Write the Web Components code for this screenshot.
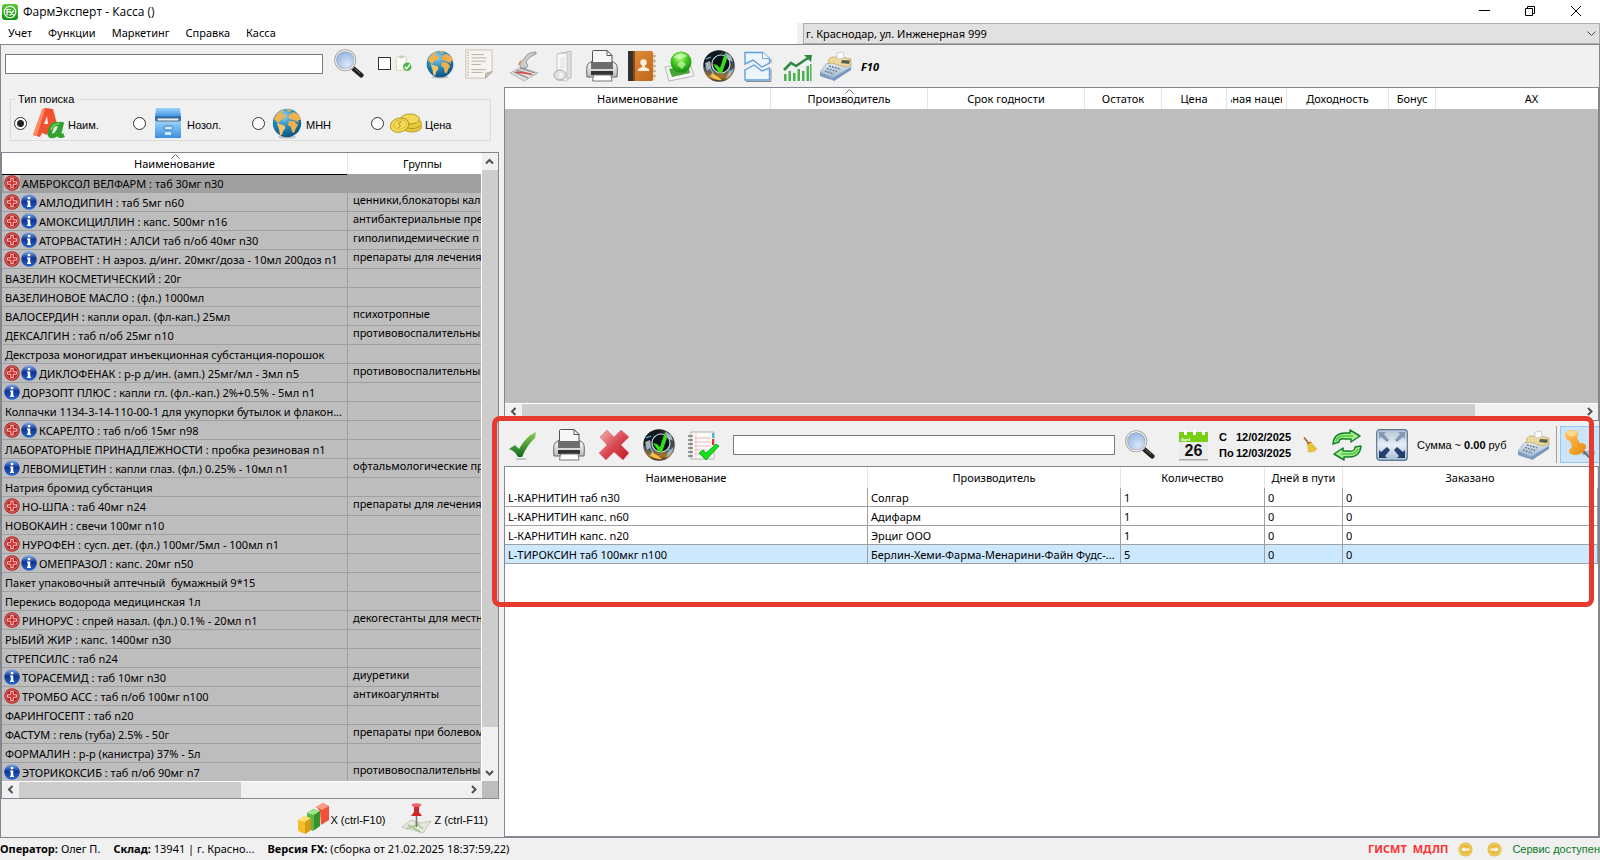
<!DOCTYPE html>
<html lang="ru">
<head>
<meta charset="utf-8">
<title>ФармЭксперт - Касса ()</title>
<style>
html,body{height:100%;margin:0}
body{background:#fff;color:#000;font:11px/16px "Noto Sans","Open Sans",sans-serif}
</style>
</head>
<body>
<fx-app></fx-app>
<script>
const CASH = `<defs><linearGradient id="a" x1="0" y1="0" x2="0" y2="1"><stop offset="0" stop-color="#e6edf4"/><stop offset="1" stop-color="#9cb6d2"/></linearGradient></defs>
<path d="M0 22 13 27 13 30Q7 29 0 26Z" fill="#7e9dc0"/><path d="M13 27 31 15 31 20 14 31 12 30Z" fill="#7298c2"/><path d="M0 22 6 14 12 12 31 14 31 17 13 28Z" fill="url(#a)" stroke="#8da5bd" stroke-width=".6"/>
<path d="M12 7 22 7 31 9 31 15 25 17 12 13 8 14 9 9Z" fill="#ecd9a0" stroke="#b59a4c" stroke-width=".6"/><path d="M22 10 30 10.500 29 14 21 13Z" fill="#56604a"/>
<path d="M17 3 23 2 24 8 17 9Z" fill="#fff" stroke="#b5bcc4" stroke-width=".7"/>
<path d="M5 21 14 24M7 18.500 17 21.500M9 16 20 19" stroke="#6d7c8c" stroke-width="1.500" stroke-dasharray="1.800 1.200"/>`;
const GLOBE = `<defs><radialGradient id="g" cx=".4" cy=".25" r=".8"><stop offset="0" stop-color="#8fd0ea"/><stop offset=".5" stop-color="#2388b8"/><stop offset="1" stop-color="#0a4c7c"/></radialGradient></defs>
<ellipse cx="16" cy="30" rx="9" ry="1.600" fill="#0003"/><circle cx="16" cy="16" r="14.200" fill="url(#g)"/>
<path d="M3 12Q6 5 12 3L13 5 10 6 12 8 15 7 14 11 11 12 9 14 8 16 6 15Z" fill="#f0b350"/><path d="M6 16 9 17 14 19 14 22 12 24 11 28 9 28 8 22Z" fill="#f7c467"/>
<path d="M15 2 21 3 18 5ZM19 7 23 5 28 8 30 13 27 13 28 16 25 14 22 13 19 12 17 10ZM18 14 23 14 27 18 25 21 23 26 21 25 20 20 17 18Z" fill="#eeb04c"/>`;
const ORB = `<defs><linearGradient id="o" x1="0" y1="0" x2="0" y2="1"><stop offset="0" stop-color="#1b2228"/><stop offset=".6" stop-color="#4c545a"/><stop offset=".85" stop-color="#a87426"/><stop offset="1" stop-color="#333"/></linearGradient></defs>
<circle cx="16" cy="16" r="15.800" fill="url(#o)"/><path d="M4 6Q10 0 19 1L13 6 6 14 1 17Q0 10 4 6Z" fill="#101820"/>
<path d="M2 13 7 11 8 18 4 21ZM22 2 28 6 30 12 26 10ZM25 23 31 18 28 25 23 29Z" fill="#aab3b9"/><path d="M3 9 8 7M7 18 10 23 7 27M22 4 26 9M25 21 30 21" stroke="#69bfe9" stroke-width="1.200" fill="none"/>
<path d="M8 27Q13 31 19 30L15 27 9 23Z" fill="#ffbf45"/><circle cx="18" cy="14" r="9" fill="#061517" stroke="#c5d5dc" stroke-width="1.200"/>
<path d="M10 14 14 15 17 18 22 3 24 9 19 23 16 23Z" fill="#35e01a"/>`;
const MAG = `<defs><radialGradient id="m" cx=".6" cy=".7" r=".7"><stop offset="0" stop-color="#dbe8fb"/><stop offset="1" stop-color="#8fb1dc"/></radialGradient></defs>
<path d="M21 21 29 28" stroke="#222" stroke-width="5" stroke-linecap="round"/><path d="M18 18 21 20" stroke="#aaa" stroke-width="3"/><path d="M22 21 28 26" stroke="#777" stroke-width="1"/>
<circle cx="12" cy="12" r="10.500" fill="url(#m)" stroke="#a0a0a0" stroke-width="2.600"/><circle cx="12" cy="12" r="10.300" fill="none" stroke="#f2f2f2" stroke-width="1.200"/>`;
const PRINTER = `<defs><linearGradient id="p" x1="0" y1="0" x2="0" y2="1"><stop offset="0" stop-color="#fff"/><stop offset="1" stop-color="#bbb"/></linearGradient></defs>
<path d="M2 14 6 11H26L30 14Q32 16 31 27H1Q0 16 2 14Z" fill="url(#p)" stroke="#666" stroke-width="1"/>
<path d="M6.500 14V1.500Q6.500 .5 7.500 .5H21L26 5.500V14Z" fill="#f7f7f7" stroke="#555"/><path d="M21 .5V5.500H26Z" fill="#fff" stroke="#555"/>
<path d="M5 12H27V19H5Z" fill="#6d6d6d"/><path d="M5 21H27V25H5Z" fill="#333"/><path d="M7.500 25H25L26 31H6.500Z" fill="#fff" stroke="#777"/>`;
const ICONS = {
logo:`<defs><linearGradient id="l" x1="0" y1="0" x2="0" y2="1"><stop offset="0" stop-color="#5ecb3a"/><stop offset="1" stop-color="#119112"/></linearGradient></defs><rect width="32" height="32" rx="6" fill="url(#l)"/><circle cx="16" cy="16" r="11.500" fill="none" stroke="#fff" stroke-width="2.200"/><path d="M10 23V11H18M10 16H16M15 14 24 23M24 13 15 23" stroke="#fff" stroke-width="2.400" fill="none"/>`,
search:MAG, globe:GLOBE, printer:PRINTER, orb:ORB, cash:CASH,
clip:`<path d="M2 4 21 3 22 28 3 29Z" fill="#fbfbf3" stroke="#d3d0b8" stroke-width="1.500"/><path d="M8 1H16V6H8Z" fill="#c9c9c9"/><circle cx="23" cy="22" r="8" fill="#4cb648"/><path d="M18 22 22 26 28 18" stroke="#fff" stroke-width="2.800" fill="none"/>`,
note:`<path d="M3 1H31V25L24 31H3Z" fill="#f6f4ef" stroke="#c6c0b5"/><path d="M31 24 24 31 24 26Z" fill="#cfc8b8" stroke="#9a9384" stroke-width=".7"/><path d="M5.500 3V30" stroke="#b9b4aa" stroke-width="1.500" stroke-dasharray="1.500 1.500"/><path d="M9 6H22M9 9.500H25M9 13H24M9 16.500H19M9 22H24M9 25H21" stroke="#b4afa5" stroke-width="1"/>`,
letters:`<path d="M0 28 9 3Q10 1 13 1L20 2 24 17 18 20 14 28 9 26 7 30Z" fill="#f2512e"/><path d="M11 17 15 17 14 9Z" fill="#efefef"/><path d="M0 28 9 3 12 2 4 29Z" fill="#ff8a68"/><path d="M29 15 26 27Q26 30 31 28M27 18Q20 15 18 22 15 29 19 29 24 29 27 20" stroke="#2fa32e" stroke-width="4.500" fill="none"/><path d="M26 17Q20 16 18 23" stroke="#7fdd5c" stroke-width="1.400" fill="none"/>`,
cabinet:`<defs><linearGradient id="c" x1="0" y1="0" x2="0" y2="1"><stop offset="0" stop-color="#9bd4fb"/><stop offset="1" stop-color="#3a8fe0"/></linearGradient></defs><path d="M4 1H28L29 10H3Z" fill="url(#c)"/><path d="M3 9H29V31H3Z" fill="#2d78c4"/><path d="M3 14H29L29 31H3Z" fill="url(#c)"/><path d="M5 11 27 11V14H5Z" fill="#e9eef2" stroke="#3c4c5c" stroke-width=".8"/><rect x="12" y="19" width="9" height="4" rx="2" fill="#cfe6fa" stroke="#3b7fc0"/><rect x="13" y="25" width="6" height="3" fill="#cfe6fa"/>`,
coins:`<g fill="#e9c93a" stroke="#a98716" stroke-width=".8"><ellipse cx="22" cy="20" rx="9.500" ry="5"/><ellipse cx="22" cy="16.500" rx="9.500" ry="5"/><ellipse cx="20" cy="12" rx="9.500" ry="5" fill="#f2d956"/><ellipse cx="9.500" cy="18" rx="9.500" ry="7" transform="rotate(-14 10 18)" fill="#f3da57"/></g><ellipse cx="10" cy="17.500" rx="6.500" ry="4.500" fill="none" stroke="#d3b236" stroke-width=".8" transform="rotate(-14 10 17)"/><path d="M11.500 15Q8 15 9 17.500 12 19 8.500 20.500" stroke="#b08c18" fill="none"/>`,
scanner:`<path d="M2 23 13 17 30 23 16 31Z" fill="#dedede" stroke="#a5a5a5" stroke-width=".7"/><path d="M6 22 20 28M9 20 25 25M12 18 27 23" stroke="#8a8a8a" stroke-width="1.300"/><path d="M8 22 23 24" stroke="#e64343" stroke-width="1.600"/><path d="M28 2Q19 2 16 9L11 13 13 18 18 18 20 16 18 12Q21 6 28 4Z" fill="#c9cdd0" stroke="#888" stroke-width=".8"/><path d="M13 11 11 15" stroke="#e09a50" stroke-width="2"/>`,
door:`<path d="M10 4 24 1V28L19 30Z" fill="#dedede" stroke="#bcbcbc"/><path d="M10 4 20 3V31L10 30Z" fill="#f7f7f7" stroke="#c6c6c6"/><path d="M13 8 18 7V18L13 19Z" fill="#eaeaea"/><ellipse cx="13" cy="25" rx="6" ry="5" fill="#e0e0e0" fill-opacity=".85" stroke="#a9a9a9"/><ellipse cx="14" cy="25" rx="1.800" ry="2.300" fill="#f5f5f5"/>`,
book:`<defs><linearGradient id="b" x1="0" y1="0" x2="1" y2="1"><stop offset="0" stop-color="#e2913c"/><stop offset="1" stop-color="#c0661a"/></linearGradient></defs><path d="M27 3H30V30H27Z" fill="#e6dccb"/><path d="M28 6H31M28 11H31M28 16H31M28 21H31M28 26H31" stroke="#9b8d78"/><rect x="3" y="1" width="25" height="30" rx="1.500" fill="url(#b)"/><path d="M3 1H8V31H3Z" fill="#353230"/><path d="M8 1H10V31H8Z" fill="#8d4b18"/><circle cx="18.500" cy="12.500" r="3.200" fill="#fbeedd"/><path d="M17 14H20V17L24 19V21H13V19L17 17Z" fill="#fbeedd"/>`,
sphere:`<defs><radialGradient id="s" cx=".45" cy=".3" r=".7"><stop offset="0" stop-color="#c9ff9c"/><stop offset=".5" stop-color="#45c81f"/><stop offset="1" stop-color="#168a10"/></radialGradient></defs><path d="M1 17 26 13 30 26 5 31Z" fill="#f4f4f4" stroke="#aaa" stroke-width=".8"/><path d="M5 19 24 15 26 23 8 27Z" fill="#4aa336"/><circle cx="17" cy="12" r="10.500" fill="url(#s)"/><path d="M9 8Q15 0 24 6 17 9 9 8ZM13 15 17 11 22 14 18 19Z" fill="#e1ffd0" opacity=".6"/>`,
chart:`<path d="M3 2.500H20.500L27.500 8.500V13L20 17 11 10 3 14Z" fill="#edf4fc" stroke="#5f9fe2" stroke-width="1.400"/><path d="M20.500 2.500V8.500H27.500" fill="#fff" stroke="#6ea7e2"/><path d="M3 20 12 15 20 21 27.500 18V30H3Z" fill="#edf4fc" stroke="#5f9fe2" stroke-width="1.400"/><path d="M29 9V13M29 19V31.500H4" stroke="#8a8a8a" fill="none"/>`,
growth:`<g fill="#4caf50"><path d="M3 24H5.500V31H3ZM7.500 21H10V31H7.500ZM12 23H14.500V31H12ZM16.500 19H19V31H16.500ZM21 21H23.500V31H21ZM25.500 16H28V31H25.500ZM29 14H30.500V31H29Z"/></g><path d="M3 20 10 13 15 16 27 8" stroke="#2f8a42" stroke-width="2.600" fill="none"/><path d="M23 5 31 5 30 12Z" fill="#2f8a42"/>`,
check:`<defs><linearGradient id="k" x1="0" y1="0" x2="0" y2="1"><stop offset="0" stop-color="#8fd05c"/><stop offset="1" stop-color="#126a1b"/></linearGradient></defs><ellipse cx="13" cy="30" rx="6" ry="1" fill="#0003"/><path d="M1 20 7 16 11 20Q18 7 28 3L27 9Q19 16 14 28L10 28Q7 22 1 20Z" fill="url(#k)"/>`,
cross:`<defs><linearGradient id="x" x1="0" y1="0" x2="1" y2="1"><stop offset="0" stop-color="#f7b6b6"/><stop offset=".5" stop-color="#d94a55"/><stop offset="1" stop-color="#c31522"/></linearGradient></defs><path d="M9 1 16 8 23 1 31 8 23 16 31 24 25 31 16 23 8 31 1 24 9 16 2 8Z" fill="url(#x)" stroke="#d98088" stroke-width=".8"/>`,
notepad:`<path d="M3 3H26V30H3Z" fill="#fcfcfc" stroke="#b0b0b0"/><path d="M24 4H26V9H24Z" fill="#35bdf0"/><path d="M24 10H26V16H24Z" fill="#e7302a"/><path d="M6 9H23M6 13H23M6 17H23M6 21H19M6 25H15" stroke="#efb3b3"/><path d="M8 4V29" stroke="#f4c3c3"/><path d="M0 7H5M0 11H5M0 15H5M0 19H5M0 23H5M0 27H5" stroke="#777" stroke-width="1.400"/><path d="M11 24 15 21 18 24 28 15 31 17 18 31Z" fill="#13e11c" stroke="#0a9a14" stroke-width=".8"/>`,
calendar:`<path d="M1 3H30V31H1Z" fill="#ebebeb"/><path d="M1 3H30V13H1Z" fill="#79cf18"/><path d="M1 30H30V31.500H1Z" fill="#aaa"/><path d="M6 1H9V6H6ZM15 1H18V6H15ZM24 1H27V6H24Z" fill="#fff"/><text x="3" y="12" font-family="Liberation Sans" font-weight="700" font-size="4" fill="#fff">April</text><text x="15.500" y="27" text-anchor="middle" font-family="Liberation Sans" font-weight="700" font-size="16" fill="#111">26</text>`,
broom:`<path d="M4 1 13 12" stroke="#a7663a" stroke-width="3.500"/><path d="M10 13 17 9 20 12 13 18Z" fill="#c64b2c"/><path d="M11 15 18 11 30 24Q24 31 13 30Z" fill="#f0cf3c" stroke="#c49b1c"/><path d="M15 17 18 28M18 15 25 26" stroke="#b98f18"/>`,
refresh:`<g fill="#a5ec8c" stroke="#15812a" stroke-width="1.500" stroke-linejoin="round"><path d="M2 15Q3 4 14 4H19V1L29 7 20 13V10H14Q8 9 8 13Z"/><path d="M30 17Q29 28 18 28H13V31L3 25 12 19V22H18Q24 23 24 18Z"/></g><path d="M5 12Q7 7 13 7H22M27 20Q25 25 19 25H10" stroke="#4fc93e" fill="none" stroke-width="1.600"/>`,
expand:`<defs><linearGradient id="e" x1="0" y1="0" x2="0" y2="1"><stop offset="0" stop-color="#b3c4d6"/><stop offset=".5" stop-color="#e6edf4"/><stop offset="1" stop-color="#a9bdd2"/></linearGradient></defs><rect x=".7" y=".7" width="30.600" height="30.600" rx="3" fill="url(#e)" stroke="#5d7590" stroke-width="1.200"/><g fill="#8499b3"><path d="M3 3H10L8 5 13 11 11 13 5 8 3 10Z"/><path d="M29 3H22L24 5 19 11 21 13 27 8 29 10Z"/></g><g fill="#22406b"><path d="M3 29H11L9 27 14 21 11 18 5 23 3 21Z"/><path d="M29 29H21L23 27 18 21 21 18 27 23 29 21Z"/></g>`,
pin:`<path d="M18 24 31 24" stroke="#a5b6c4" stroke-width="4"/><path d="M17 20 26 29" stroke="#5f6b75" stroke-width="2"/><defs><linearGradient id="n" x1="0" y1="0" x2="1" y2="1"><stop offset="0" stop-color="#ffc45c"/><stop offset="1" stop-color="#e98a0b"/></linearGradient></defs><path d="M1 7Q1 2 7 1 14 1 14 5L13 9 16 14Q23 14 22 19 19 25 12 26 4 26 5 21L8 18 6 12Q2 11 1 7Z" fill="url(#n)"/><ellipse cx="8" cy="4.500" rx="5" ry="3" fill="#ffd98c"/>`,
cubes:`<path d="M1 17 7 13 14 15 14 27 8 31 1 28Z" fill="#f4be2a"/><path d="M1 17 7 13 14 15 8 19Z" fill="#ffe07a"/><path d="M8 19 14 15V27L8 31Z" fill="#d69a15"/><path d="M10 10 16 6 23 8V23L16 28 14 27V15L10 14Z" fill="#5cb946"/><path d="M10 10 16 6 23 8 17 12Z" fill="#a2e38a"/><path d="M17 12 23 8V23L17 27Z" fill="#37912c"/><path d="M19 4 26 0 32 3V17L24 22 23 8Z" fill="#ef5236"/><path d="M19 4 26 0 32 3 25 7Z" fill="#ff9d84"/>`,
mappin:`<path d="M1 24 10 17 20 20 30 18 22 30 12 27Z" fill="#e6e8df" stroke="#b9bdb2" stroke-width=".8"/><path d="M7 22 13 25 19 29M14 19 22 26M5 26 18 21" stroke="#a8c48f" stroke-width="1.600" fill="none"/><path d="M15.500 13V24" stroke="#777" stroke-width="1.500"/><path d="M11 1H20L18 4 18 9 21 13H10L13 9V4Z" fill="#cc2a30"/><ellipse cx="15.500" cy="2" rx="5" ry="1.800" fill="#e8666a"/>`,
plus:`<circle cx="16" cy="16" r="15.500" fill="#b52222"/><circle cx="16" cy="16" r="12.500" fill="none" stroke="#e8b4b4" stroke-width="1.200"/><path d="M13.500 7H18.500V13.500H25V18.500H18.500V25H13.500V18.500H7V13.500H13.500Z" fill="#d62828" stroke="#f4d8d8" stroke-width="1.800"/>`,
info:`<defs><linearGradient id="i" x1="0" y1="0" x2="0" y2="1"><stop offset="0" stop-color="#86acee"/><stop offset=".45" stop-color="#0c3494"/><stop offset="1" stop-color="#2a68d4"/></linearGradient></defs><circle cx="16" cy="16" r="15.500" fill="url(#i)"/><rect x="13.500" y="6" width="5" height="4.500" fill="#fff"/><path d="M12 13H18.500V23.500H20V26H12V23.500H13.500V15.500H12Z" fill="#fff"/>`,
back:`<circle cx="16" cy="16" r="15" fill="#e9b93a"/><circle cx="16" cy="16" r="11.500" fill="none" stroke="#f8e3a4" stroke-width="1.500"/><path d="M7 16 14 10V14H24V18H14V22Z" fill="#fff"/>`,
forward:`<circle cx="16" cy="16" r="15" fill="#e9b93a"/><circle cx="16" cy="16" r="11.500" fill="none" stroke="#f8e3a4" stroke-width="1.500"/><path d="M25 16 18 10V14H8V18H18V22Z" fill="#fff"/>`
};
const define = (name, html) => customElements.define(name, class extends HTMLElement {
  constructor(){ super(); this.attachShadow({mode:'open'}); }
  connectedCallback(){
    if (this.shadowRoot.childNodes.length) return;
    const t = document.createElement('template');
    t.innerHTML = typeof html === 'function' ? html(this) : html;
    this.shadowRoot.append(t.content.cloneNode(true));
  }
});

define('fx-icon', el => `<style>:host{display:block;flex:none;width:var(--size,32px);height:var(--size,32px)}svg{display:block;width:100%;height:100%}</style>
<svg viewBox="0 0 32 32" aria-hidden="true">${ICONS[el.getAttribute('name')]}</svg>`);

define('fx-tool', el => `<style>:host{display:block;flex:none}
button{display:flex;align-items:center;justify-content:center;gap:2px;box-sizing:border-box;width:100%;height:100%;margin:0;padding:0;border:0;background:none;font:inherit;color:inherit;white-space:nowrap}
:host([pressed]) button{background:#cce4f7;border:1px solid #90c8f6;border-right:0}</style>
<button type="button" aria-label="${el.getAttribute('label')}"><fx-icon name="${el.getAttribute('icon')}"></fx-icon><slot></slot></button>`);

define('fx-scrollbar', el => {
  const v = el.hasAttribute('vertical'), [a, b] = (el.getAttribute('parts')).split(' ');
  return `<style>:host{display:flex;flex-direction:${v ? 'column' : 'row'};flex:none;${v ? 'width' : 'height'}:16px;background:#f0f0f0}
button{flex:none;display:grid;place-items:center;width:${v ? 15 : 17}px;height:${v ? 17 : 15}px;margin:0;padding:0;border:0;background:none}
svg{display:block;width:9px;height:9px;fill:none;stroke:#505050;stroke-width:2}
.thumb{flex:${a} 1 0;background:#cdcdcd}.rest{flex:${b} 1 0}</style>
<button type="button" aria-label="Назад"><svg viewBox="0 0 9 9"><path d="${v ? 'M1 6.500 4.500 3 8 6.500' : 'M6.500 1 3 4.500 6.500 8'}"/></svg></button>
<div class="thumb"></div><div class="rest"></div>
<button type="button" aria-label="Вперёд"><svg viewBox="0 0 9 9"><path d="${v ? 'M1 3 4.500 6.500 8 3' : 'M3 1 6.500 4.500 3 8'}"/></svg></button>`;
});

define('fx-titlebar', `<style>:host{display:flex;align-items:center;flex:none;height:23px;padding-left:2px;font-size:12px}
fx-icon{--size:16px}h1{flex:1;margin:0 0 0 5px;font:400 12px/23px "Open Sans","Noto Sans",sans-serif}
button{width:46px;height:21px;margin:0;padding:0;border:0;background:none;display:grid;place-items:center}svg{width:12px;height:12px;fill:none;stroke:#000}</style>
<fx-icon name="logo"></fx-icon><h1>ФармЭксперт - Касса ()</h1>
<button type="button" aria-label="Свернуть"><svg viewBox="0 0 12 12"><path d="M0 4.500H11"/></svg></button>
<button type="button" aria-label="Восстановить"><svg viewBox="0 0 12 12"><path d="M.5 2.500H7.500V9.500H.5ZM2.500 2V.5H9.500V7.500H8"/></svg></button>
<button type="button" aria-label="Закрыть"><svg viewBox="0 0 12 12"><path d="M0 0 10 10M10 0 0 10"/></svg></button>`);

define('fx-menubar', `<style>:host{display:flex;flex:none;height:21px}
nav{flex:1;display:flex;gap:16px;padding-left:8px}
nav a{color:inherit;text-decoration:none;line-height:20px}
.place{box-sizing:border-box;width:calc(50% + 3px);padding-left:6px;background:#f0f0f0;position:relative;display:flex}
select{appearance:none;flex:1;height:21px;margin:0;padding:0 20px 0 2px;border:1px solid #adadad;border-radius:0;background:#e1e1e1;color:#000;font:inherit}
svg{position:absolute;right:4px;top:7px;width:9px;height:7px;fill:none;stroke:#444}</style>
<nav><a href="#">Учет</a><a href="#">Функции</a><a href="#">Маркетинг</a><a href="#">Справка</a><a href="#">Касса</a></nav>
<div class="place"><select aria-label="Адрес аптеки"><option>г. Краснодар, ул. Инженерная 999</option></select><svg viewBox="0 0 9 7"><path d="M.5 1.500 4.500 5.500 8.500 1.500"/></svg></div>`);

define('fx-search', `<style>:host{display:block;flex:none;height:107px;font-family:"Liberation Sans",sans-serif}
.row{display:flex;align-items:center;height:37px;padding-left:4px}
input[type=text]{box-sizing:border-box;width:318px;height:20px;margin:0 10px 0 0;border:1px solid #7a7a7a;background:#fff;font:inherit}
.check{display:flex;align-items:center;gap:4px;margin:0 12px 0 13px}
.check input{appearance:none;width:13px;height:13px;margin:0;border:1px solid #333;background:#fff}
.check fx-icon{--size:17px}.row>fx-tool{width:32px;--size:30px}.row>.n{margin-left:6px;--size:30px}
fieldset{box-sizing:border-box;width:480px;height:50px;margin:9px 0 0 9px;padding:0 0 0 3px;border:1px solid #dcdcdc;display:block}
legend{margin-left:1px;padding:0 3px;line-height:16px}
.types{display:grid;grid-template-columns:repeat(4,119px)}
.types label{display:flex;align-items:center}
.types span{padding-top:3px}
.types input{appearance:none;box-sizing:border-box;width:13px;height:13px;margin:0 6px 0 0;border:1px solid #333;border-radius:50%;background:#fff}
.types input:checked{background:radial-gradient(circle,#222 0 3px,#fff 4px)}
.types fx-icon{margin-right:3px}</style>
<div class="row"><input type="text" aria-label="Поиск"><fx-tool icon="search" label="Найти"></fx-tool>
<label class="check"><input type="checkbox" aria-label="Только в наличии"><fx-icon name="clip"></fx-icon></label>
<fx-tool icon="globe" label="МНН"></fx-tool><fx-tool class="n" icon="note" label="Заметки"></fx-tool></div>
<fieldset><legend>Тип поиска</legend><div class="types">
<label><input type="radio" name="t" checked><fx-icon name="letters"></fx-icon><span>Наим.</span></label>
<label><input type="radio" name="t"><fx-icon name="cabinet"></fx-icon><span>Нозол.</span></label>
<label><input type="radio" name="t"><fx-icon name="globe"></fx-icon><span>МНН</span></label>
<label><input type="radio" name="t"><fx-icon name="coins"></fx-icon><span>Цена</span></label></div></fieldset>`);

const TABLE = `table{border-collapse:separate;border-spacing:0;table-layout:fixed;width:100%}
th{box-sizing:border-box;position:relative;height:21px;padding:0 4px;background:#fff;border-right:1px solid #e5e5e5;font-weight:400;line-height:20px;text-align:center;white-space:nowrap;overflow:hidden}
th div{display:flex;justify-content:center;overflow:hidden}
td{box-sizing:border-box;height:19px;padding:0 0 0 3px;border-right:1px solid #a0a0a0;border-bottom:1px solid #a0a0a0;line-height:18px;white-space:nowrap;overflow:hidden;text-overflow:ellipsis}
th svg{position:absolute;left:calc(50% - 4px);top:1px;width:9px;height:5px;fill:none;stroke:#666}`;
const CARET = `<svg viewBox="0 0 9 5"><path d="M.5 4.500 4.500 .5 8.500 4.500"/></svg>`;

const DRUGS = [
['+','АМБРОКСОЛ ВЕЛФАРМ : таб 30мг n30',''],['+i','АМЛОДИПИН : таб 5мг n60','ценники,блокаторы кал'],
['+i','АМОКСИЦИЛЛИН : капс. 500мг n16','антибактериальные пре'],['+i','АТОРВАСТАТИН : АЛСИ таб п/об 40мг n30','гиполипидемические п'],
['+i','АТРОВЕНТ : Н аэроз. д/инг. 20мкг/доза - 10мл 200доз n1','препараты для лечения'],['','ВАЗЕЛИН КОСМЕТИЧЕСКИЙ : 20г',''],
['','ВАЗЕЛИНОВОЕ МАСЛО : (фл.) 1000мл',''],['','ВАЛОСЕРДИН : капли орал. (фл-кап.) 25мл','психотропные'],
['','ДЕКСАЛГИН : таб п/об 25мг n10','противовоспалительны'],['','Декстроза моногидрат инъекционная субстанция-порошок',''],
['+i','ДИКЛОФЕНАК : р-р д/ин. (амп.) 25мг/мл - 3мл n5','противовоспалительны'],['i','ДОРЗОПТ ПЛЮС : капли гл. (фл.-кап.) 2%+0.5% - 5мл n1',''],
['','Колпачки 1134-3-14-110-00-1 для укупорки бутылок и флакон...',''],['+i','КСАРЕЛТО : таб п/об 15мг n98',''],
['','ЛАБОРАТОРНЫЕ ПРИНАДЛЕЖНОСТИ : пробка резиновая n1',''],['i','ЛЕВОМИЦЕТИН : капли глаз. (фл.) 0.25% - 10мл n1','офтальмологические пр'],
['','Натрия бромид субстанция',''],['+','НО-ШПА : таб 40мг n24','препараты для лечения'],['','НОВОКАИН : свечи 100мг n10',''],
['+','НУРОФЕН : сусп. дет. (фл.) 100мг/5мл - 100мл n1',''],['+i','ОМЕПРАЗОЛ : капс. 20мг n50',''],
['','Пакет упаковочный аптечный&nbsp; бумажный 9*15',''],['','Перекись водорода медицинская 1л',''],
['+','РИНОРУС : спрей назал. (фл.) 0.1% - 20мл n1','декогестанты для местн'],['','РЫБИЙ ЖИР : капс. 1400мг n30',''],['','СТРЕПСИЛС : таб n24',''],
['i','ТОРАСЕМИД : таб 10мг n30','диуретики'],['+','ТРОМБО АСС : таб п/об 100мг n100','антикоагулянты'],['','ФАРИНГОСЕПТ : таб n20',''],
['','ФАСТУМ : гель (туба) 2.5% - 50г','препараты при болевом'],['','ФОРМАЛИН : р-р (канистра) 37% - 5л',''],['i','ЭТОРИКОКСИБ : таб п/об 90мг n7','противовоспалительны']];

define('fx-drug-list', () => `<style>:host{display:grid;grid-template:minmax(0,1fr) 17px/minmax(0,1fr) 16px;flex:1 1 0;min-height:0;width:496px;border:1px solid #828790;background:#bdbdbd}
${TABLE}
.body{overflow:hidden;border-right:1px solid #fff}
table{width:calc(100% + 16px)}
col.n{width:346px}
td.n{padding:0 0 0 2px}
td.n div{display:flex;align-items:center;height:18px}
fx-icon{--size:16px;margin-right:1px}
td span{padding:1px 0 0 1px}
td.g{padding-left:5px;line-height:14px;vertical-align:top;text-overflow:clip;border-right:0}
th:last-child{border-right:0}
.sel td{background:#a0a0a0;border-color:#a0a0a0}
.sel td.n{box-shadow:inset 0 1px #000}.sel fx-icon{background:#bdbdbd}
.h{border-top:1px solid #fff}</style>
<div class="body"><table><colgroup><col class="n"><col></colgroup><thead><tr><th>${CARET}Наименование</th><th>Группы</th></tr></thead>
<tbody>${DRUGS.map(([k,n,g],i) => `<tr${i ? '' : ' class="sel"'}><td class="n"><div>${k.includes('+') ? '<fx-icon name="plus"></fx-icon>' : ''}${k.includes('i') ? '<fx-icon name="info"></fx-icon>' : ''}<span>${n}</span></div></td><td class="g">${g}</td></tr>`).join('')}</tbody></table></div>
<fx-scrollbar vertical parts="558 37"></fx-scrollbar><fx-scrollbar class="h" parts="222 224"></fx-scrollbar>`);

define('fx-left', `<style>:host{display:flex;flex-direction:column;flex:none;width:503px}
.foot{flex:none;display:flex;align-items:flex-end;justify-content:flex-end;gap:16px;height:38px;padding-right:16px;font-family:"Liberation Sans",sans-serif}
fx-tool{height:37px}fx-tool span{padding-top:2px;margin-left:-1px}</style>
<fx-search></fx-search><fx-drug-list></fx-drug-list>
<div class="foot"><fx-tool icon="cubes" label="X (ctrl-F10)"><span>X (ctrl-F10)</span></fx-tool><fx-tool icon="mappin" label="Z (ctrl-F11)"><span>Z (ctrl-F11)</span></fx-tool></div>`);

define('fx-stock', `<style>:host{display:flex;flex-direction:column;flex:47 1 0;min-height:0}
.tools{display:flex;align-items:center;flex:none;height:42px}
.tools fx-tool{width:39px}.tools b{margin-left:6px;padding-top:2px;font:italic 700 11px/16px "Noto Sans",sans-serif}
.grid{flex:1;display:flex;flex-direction:column;min-height:0;border:1px solid #828790;background:#bdbdbd}
.body{flex:1;min-height:0;overflow:hidden}
fx-scrollbar{border-top:1px solid #fff}
${TABLE}
table{width:calc(100% + 30px)}</style>
<div class="tools"><fx-tool icon="scanner" label="Сканер"></fx-tool><fx-tool icon="door" label="Открыть"></fx-tool><fx-tool icon="printer" label="Печать"></fx-tool><fx-tool icon="book" label="Контакты"></fx-tool><fx-tool icon="sphere" label="Сеть"></fx-tool><fx-tool icon="orb" label="Проверка"></fx-tool><fx-tool icon="chart" label="Отчёт"></fx-tool><fx-tool icon="growth" label="Рост"></fx-tool><fx-tool icon="cash" label="Касса"></fx-tool><b>F10</b></div>
<div class="grid"><div class="body"><table><colgroup><col style="width:266px"><col style="width:157px"><col style="width:157px"><col style="width:77px"><col style="width:65px"><col style="width:60px"><col style="width:102px"><col style="width:47px"><col></colgroup>
<thead><tr><th>Наименование</th><th>${CARET}Производитель</th><th>Срок годности</th><th>Остаток</th><th>Цена</th><th><div>ьная нацен</div></th><th>Доходность</th><th>Бонус</th><th>АХ</th></tr></thead></table></div>
<fx-scrollbar parts="953 106"></fx-scrollbar></div>`);

const ORDERS = [['L-КАРНИТИН таб n30','Солгар','1'],['L-КАРНИТИН капс. n60','Адифарм','1'],['L-КАРНИТИН капс. n20','Эрциг ООО','1'],['L-ТИРОКСИН таб 100мкг n100','Берлин-Хеми-Фарма-Менарини-Файн Фудс-...','5']];
define('fx-order', () => `<style>:host{display:flex;flex-direction:column;flex:52 1 0;min-height:0;position:relative}
.tools{box-sizing:border-box;display:flex;align-items:center;gap:5px;flex:none;height:45px;padding-top:2px}
fx-tool{width:40px}
input{box-sizing:border-box;flex:1;min-width:0;height:20px;margin:0 0 0 4px;border:1px solid #7a7a7a;background:#fff;font:inherit}
.find{--size:30px}
.cal{margin-left:9px}
.dates{display:grid;grid-template-columns:17px 57px;width:74px;font:700 11px/16px "Liberation Sans",sans-serif}
.broom{width:24px;--size:16px}
.sum{width:92px;white-space:nowrap;font-family:"Liberation Sans",sans-serif}
.sep{width:1px;height:37px;margin:0 -2px 0 -3px;background:#a0a0a0}
.pin{width:39px;height:37px}
.grid{flex:1;min-height:0;border:1px solid #828790;background:#fff}
.mark{position:absolute;left:-12px;right:5px;top:-5px;height:181px;border:5px solid #e53a30;border-radius:8px;pointer-events:none}
${TABLE}
th{line-height:21px}
td{padding-top:2px;line-height:16px}
.cur td{background:#cce8ff}</style>
<div class="tools"><fx-tool icon="check" label="Подтвердить"></fx-tool><fx-tool icon="printer" label="Печать"></fx-tool><fx-tool icon="cross" label="Удалить"></fx-tool><fx-tool icon="orb" label="Проверка"></fx-tool><fx-tool icon="notepad" label="Список"></fx-tool>
<input type="text" aria-label="Поиск по заказу"><fx-tool class="find" icon="search" label="Найти"></fx-tool><fx-tool class="cal" icon="calendar" label="Период"></fx-tool>
<div class="dates"><span>С</span><span>12/02/2025</span><span>По</span><span>12/03/2025</span></div>
<fx-tool class="broom" icon="broom" label="Очистить"></fx-tool><fx-tool icon="refresh" label="Обновить"></fx-tool><fx-tool icon="expand" label="Развернуть"></fx-tool>
<div class="sum">Сумма ~ <b>0.00</b> руб</div><fx-tool icon="cash" label="Касса"></fx-tool><div class="sep"></div><fx-tool class="pin" pressed icon="pin" label="Закрепить"></fx-tool></div>
<div class="grid"><table><colgroup><col style="width:363px"><col style="width:253px"><col style="width:144px"><col style="width:78px"><col></colgroup>
<thead><tr><th>Наименование</th><th>Производитель</th><th>Количество</th><th>Дней в пути</th><th>Заказано</th></tr></thead>
<tbody>${ORDERS.map((r,i) => `<tr${i === 3 ? ' class="cur"' : ''}>${[...r,'0','0'].map(c => `<td>${c}</td>`).join('')}</tr>`).join('')}</tbody></table></div><div class="mark"></div>`);

define('fx-status', `<style>:host{display:flex;align-items:center;flex:none;height:22px;background:#f0f0f0;white-space:nowrap}
span{margin:0 13px 0 3px}.push{flex:1}.r{color:#ff3030;margin-right:6px}
fx-icon{--size:15px;margin:0 0 0 14px}fx-icon:first-of-type{margin-left:4px}
a{margin-left:10px;color:#0a7a1e;text-decoration:none;font-family:"Liberation Sans",sans-serif}</style>
<b>Оператор:</b><span>Олег П.</span><b>Склад:</b><span>13941 | г. Красно...</span><b>Версия FX:</b><span>(сборка от 21.02.2025 18:37:59,22)</span><div class="push"></div>
<b class="r">ГИСМТ</b><b class="r">МДЛП</b><fx-icon name="back"></fx-icon><fx-icon name="forward"></fx-icon><a href="#">Сервис доступен</a>`);

define('fx-app', `<style>:host{display:flex;flex-direction:column;height:100vh;min-height:560px;overflow:hidden}
main{flex:1;min-height:0;display:flex;border:1px solid #828790;background:#f0f0f0}
.right{flex:1;min-width:0;display:flex;flex-direction:column}</style>
<fx-titlebar></fx-titlebar><fx-menubar></fx-menubar>
<main><fx-left></fx-left><div class="right"><fx-stock></fx-stock><fx-order></fx-order></div></main>
<fx-status></fx-status>`);
</script>
</body>
</html>
